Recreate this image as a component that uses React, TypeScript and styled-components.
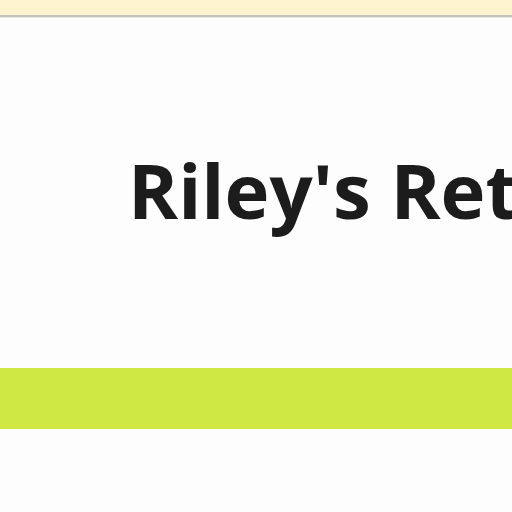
import React from 'react';
import styled, {createGlobalStyle} from 'styled-components';

const GlobalStyle = createGlobalStyle`
  html, body {
    margin: 0;
    padding: 0;
    overflow: hidden;
    background-color: #fdfdfd;
    font-family: "Open Sans", "Noto Sans", sans-serif;
  }
`

const Page = styled.div`
  display: flex;
  flex-direction: column;
  min-height: 512px;
`

const Notice = styled.div`
  height: 15px;
  background-color: #fff4d0;
  border-bottom: 2px solid #c4c2bc;
  box-shadow: 0 1px 0 #e8e8e8;
`

const Hero = styled.header`
  height: 351px;
  display: flex;
  align-items: center;
  padding-left: 128px;
  box-sizing: border-box;
  overflow: hidden;
`

const Title = styled.h1`
  margin: 0 0 5px 0;
  font-size: 76px;
  font-weight: 700;
  line-height: 1;
  color: #1c1c1c;
  white-space: nowrap;
`

const Band = styled.div`
  height: 61px;
  background-color: #cfe844;
`

const App = () => (
    <>
        <GlobalStyle/>
        <Page>
            <Notice/>
            <Hero>
                <Title>Riley's Retrospective</Title>
            </Hero>
            <Band/>
        </Page>
    </>
);

export default App;
